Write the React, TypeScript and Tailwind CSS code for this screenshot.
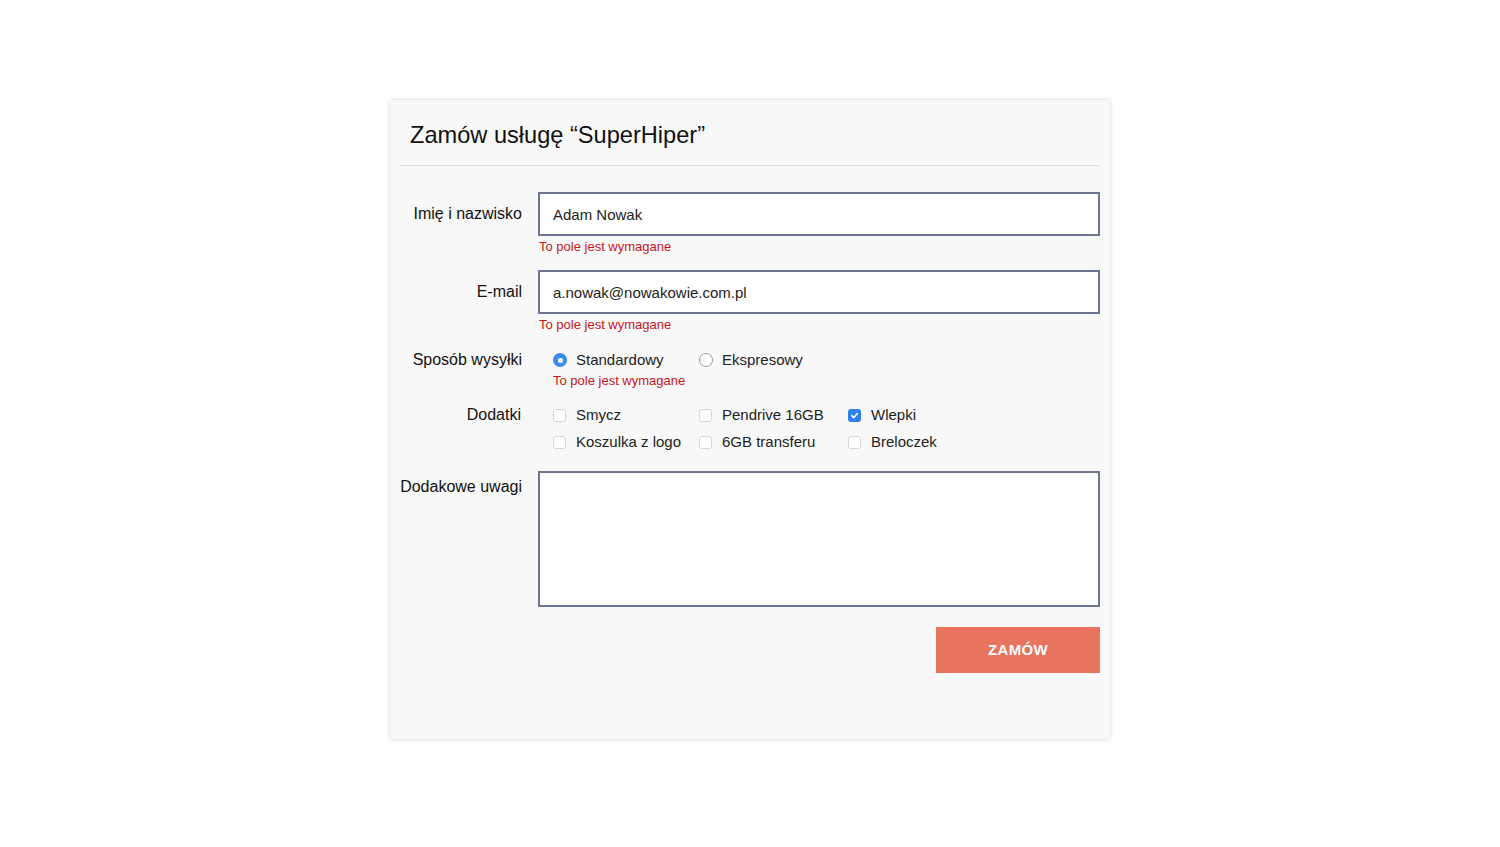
import React from 'react';

const font = { fontFamily: '"Liberation Sans", Arial, sans-serif' };

const ErrorText: React.FC<{ className?: string }> = ({ className = '' }) => (
  <p className={`text-[13px] leading-[16px] text-[#c4161c] ${className}`}>To pole jest wymagane</p>
);

const Radio: React.FC<{ label: string; checked?: boolean }> = ({ label, checked }) => (
  <label className="flex items-center h-[18px]">
    {checked ? (
      <span className="w-[14px] h-[14px] rounded-full bg-[#3a8ee8] flex items-center justify-center">
        <span className="w-[5px] h-[5px] rounded-full bg-white" />
      </span>
    ) : (
      <span className="w-[14px] h-[14px] rounded-full border border-[#9a9a9a] bg-white" />
    )}
    <span className="ml-[9px] text-[15px] text-[#222]">{label}</span>
  </label>
);

const Check: React.FC<{ label: string; checked?: boolean }> = ({ label, checked }) => (
  <label className="flex items-center h-[18px]">
    {checked ? (
      <span className="w-[13px] h-[13px] rounded-[3px] bg-[#2f80ed] flex items-center justify-center">
        <svg width="9" height="9" viewBox="0 0 10 10" fill="none">
          <path d="M2 5.2 L4.2 7.3 L8.2 2.8" stroke="white" strokeWidth="1.8" strokeLinecap="round" strokeLinejoin="round" />
        </svg>
      </span>
    ) : (
      <span className="w-[13px] h-[13px] rounded-[3px] border border-[#d6d6d6] bg-white" />
    )}
    <span className="ml-[10px] text-[15px] text-[#222]">{label}</span>
  </label>
);

export default function App() {
  return (
    <div className="min-h-screen bg-white pt-[100px]" style={font}>
      <div className="mx-auto w-[720px] h-[639px] bg-[#f8f8f8] px-[10px] shadow-[0_0_4px_rgba(0,0,0,0.18)]">
        <div className="pt-[22px] pb-[17px] pl-[10px] border-b border-[#dddddd]">
          <h1 className="text-[23.6px] leading-[26px] text-[#111]">Zamów usługę “SuperHiper”</h1>
        </div>

        <div className="mt-[26px] flex flex-col">
          <div className="flex">
            <div className="w-[122px] h-[44px] flex items-center justify-end text-[16px] text-[#111]">Imię i nazwisko</div>
            <div className="flex-1 ml-[16px]">
              <input
                defaultValue="Adam Nowak"
                className="w-full h-[44px] border-2 border-[#6e7590] bg-white pl-[13px] text-[15px] text-[#222] outline-none"
              />
              <ErrorText className="mt-[3px] pl-[1px]" />
            </div>
          </div>

          <div className="flex mt-[15px]">
            <div className="w-[122px] h-[44px] flex items-center justify-end text-[16px] text-[#111]">E-mail</div>
            <div className="flex-1 ml-[16px]">
              <input
                defaultValue="a.nowak@nowakowie.com.pl"
                className="w-full h-[44px] border-2 border-[#6e7590] bg-white pl-[13px] text-[15px] text-[#222] outline-none"
              />
              <ErrorText className="mt-[3px] pl-[1px]" />
            </div>
          </div>

          <div className="flex mt-[18px]">
            <div className="w-[122px] h-[18px] flex items-center justify-end text-[16px] text-[#111]">Sposób wysyłki</div>
            <div className="flex-1 ml-[31px]">
              <div className="grid grid-cols-[146px_149px_auto]">
                <Radio label="Standardowy" checked />
                <Radio label="Ekspresowy" />
              </div>
              <ErrorText className="mt-[4px]" />
            </div>
          </div>

          <div className="flex mt-[17px]">
            <div className="w-[122px] h-[18px] flex items-center justify-end text-[16px] text-[#111] pr-[1px]">Dodatki</div>
            <div className="flex-1 ml-[31px] grid grid-cols-[146px_149px_auto] gap-y-[9px]">
              <Check label="Smycz" />
              <Check label="Pendrive 16GB" />
              <Check label="Wlepki" checked />
              <Check label="Koszulka z logo" />
              <Check label="6GB transferu" />
              <Check label="Breloczek" />
            </div>
          </div>

          <div className="flex mt-[20px]">
            <div className="w-[122px] pt-[7px] text-right text-[16px] leading-[18px] text-[#111]">Dodakowe uwagi</div>
            <div className="flex-1 ml-[16px]">
              <textarea className="block w-full h-[136px] border-2 border-[#6e7590] bg-white resize-none outline-none" />
            </div>
          </div>

          <div className="flex justify-end mt-[20px]">
            <button className="w-[164px] h-[46px] bg-[#e8735f] text-white text-[15px] font-bold tracking-[0.3px]">
              ZAMÓW
            </button>
          </div>
        </div>
      </div>
    </div>
  );
}
